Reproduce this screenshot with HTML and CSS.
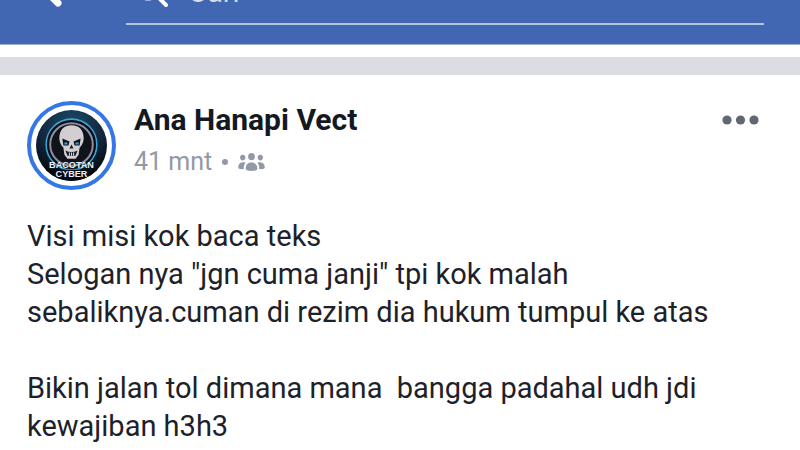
FILE: index.html
```html
<!DOCTYPE html>
<html lang="id">
<head>
    <meta charset="UTF-8">
    <meta name="viewport" content="width=device-width, initial-scale=1.0">
    <title>Ana Hanapi Vect</title>
    <link rel="stylesheet" href="styles.css">
</head>
<body>
    <header class="top-bar">
        <button class="back-btn" type="button" aria-label="Kembali">
            <svg width="40" height="40" viewBox="0 0 40 40">
                <path d="M26 2L10 18L26 34" fill="none" stroke="#fff" stroke-width="7" stroke-linecap="round" stroke-linejoin="round"/>
            </svg>
        </button>
        <form class="search-box">
            <svg class="search-icon" width="32" height="32" viewBox="0 0 32 32">
                <circle cx="12" cy="12" r="11" fill="none" stroke="#fff" stroke-width="3"/>
                <path d="M20 19L30 29" stroke="#fff" stroke-width="4" stroke-linecap="round"/>
            </svg>
            <input type="search" placeholder="Cari" aria-label="Cari">
        </form>
    </header>

    <main class="feed">
        <article class="post">
            <div class="post-header">
                <a class="avatar" href="#" aria-label="Ana Hanapi Vect">
                    <svg viewBox="0 0 70 70">
                        <defs>
                            <clipPath id="round"><circle cx="35" cy="35" r="35"/></clipPath>
                            <radialGradient id="night" cx="50%" cy="20%" r="75%">
                                <stop offset="0" stop-color="#1c4a66"/>
                                <stop offset="0.6" stop-color="#12283e"/>
                                <stop offset="1" stop-color="#050a12"/>
                            </radialGradient>
                        </defs>
                        <g clip-path="url(#round)">
                            <rect width="70" height="70" fill="url(#night)"/>
                            <circle cx="35" cy="34" r="25" fill="#0a0e18" stroke="#3da5d6" stroke-width="1.5"/>
                            <circle cx="35" cy="34" r="21" fill="#11131c" stroke="#8d909b" stroke-width="2"/>
                            <!-- skull -->
                            <path d="M35 15C27 15 23 20 23 28C23 32 25 35 27 37L28 44L31 48H39L42 44L43 37C45 35 47 32 47 28C47 20 43 15 35 15Z" fill="#d3ced1"/>
                            <path d="M26 28L33 31L32 35L27 35ZM44 28L37 31L38 35L43 35Z" fill="#10141f"/>
                            <path d="M28 33H31M39 33H42" stroke="#3fa3d6" stroke-width="2"/>
                            <path d="M35 34L33 38H37Z" fill="#191a24"/>
                            <path d="M29 40Q35 43 41 40L39 45H31Z" fill="#20212b"/>
                            <path d="M33 42V45M35 42V45M37 42V45" stroke="#d5d2d5"/>
                            <path d="M0 59H70V70H0Z" fill="#050a12"/>
                            <text class="avatar-text" x="35" y="57">BACOTAN</text>
                            <text class="avatar-text" x="35" y="66">CYBER</text>
                        </g>
                    </svg>
                </a>
                <div class="post-info">
                    <h1><a href="#">Ana Hanapi Vect</a></h1>
                    <p class="post-meta">
                        <span>41 mnt</span>
                        <span class="dot"></span>
                        <svg width="27" height="18" viewBox="0 0 27 18" fill="#9299a6" role="img" aria-label="Grup">
                            <ellipse cx="13.5" cy="3.6" rx="3.4" ry="3.6"/>
                            <ellipse cx="4.7" cy="4.6" rx="2.6" ry="2.8"/>
                            <ellipse cx="22.3" cy="4.6" rx="2.6" ry="2.8"/>
                            <path d="M7.7 15.5C7.7 11.5 10 9.6 13.5 9.6S19.3 11.5 19.3 15.5C19.3 17.2 18 17.9 13.5 17.9S7.7 17.2 7.7 15.5Z"/>
                            <path d="M7.6 9.6C6 12 5.5 14 5.9 16.1C2.5 16.5 0.2 16 0.2 14.5C0.2 10.5 3 8.7 7.6 9.6Z"/>
                            <path d="M19.4 9.6C21 12 21.5 14 21.1 16.1C24.5 16.5 26.8 16 26.8 14.5C26.8 10.5 24 8.7 19.4 9.6Z"/>
                        </svg>
                    </p>
                </div>
                <button class="more-btn" type="button" aria-label="Lainnya">
                    <svg width="37" height="10" viewBox="0 0 37 10" fill="#616874">
                        <circle cx="5" cy="5" r="4.6"/>
                        <circle cx="18.5" cy="5" r="4.6"/>
                        <circle cx="32" cy="5" r="4.6"/>
                    </svg>
                </button>
            </div>
            <div class="post-text">
                <p>Visi misi kok baca teks<br>Selogan nya "jgn cuma janji" tpi kok malah sebaliknya.cuman di rezim dia hukum tumpul ke atas</p>
                <p>Bikin jalan tol dimana mana&nbsp; bangga padahal udh jdi kewajiban h3h3</p>
            </div>
        </article>
    </main>
</body>
</html>
```
FILE: styles.css
```css
* {
    margin: 0;
    padding: 0;
    box-sizing: border-box;
    font-family: Roboto, sans-serif;
}

body {
    background-color: #fff;
    color: #1d2129;
}

a {
    color: inherit;
    text-decoration: none;
}

button {
    background: none;
    border: none;
    cursor: pointer;
}

svg {
    display: block;
}

/* Top bar, partly scrolled out of view */
.top-bar {
    display: flex;
    align-items: flex-end;
    height: 45px;
    padding: 0 36px 19px 32px;
    background-color: #4267b2;
    border-bottom: 1px solid #9fb2d8;
    overflow: hidden;
}

.back-btn {
    margin-right: 54px;
    padding-bottom: 16px;
}

.search-box {
    flex: 1;
    display: flex;
    align-items: flex-end;
    height: 60px;
    padding: 0 10px 15px;
    border-bottom: 2px solid #b3c2e0;
}

.search-icon {
    margin-right: 20px;
}

.search-box input {
    flex: 1;
    min-width: 0;
    height: 32px;
    border: none;
    outline: none;
    background: none;
    color: #fff;
    font-size: 29px;
}

.search-box input::placeholder {
    color: #d4ddee;
}

.feed {
    margin-top: 12px;
    border-top: 18px solid #dcdde2;
}

.post {
    padding: 26px 27px;
}

.post-header {
    display: flex;
    align-items: flex-start;
}

.avatar {
    width: 89px;
    height: 89px;
    margin-right: 18px;
    padding: 5px;
    border: 4px solid #3578e5;
    border-radius: 50%;
}

.avatar-text {
    fill: #e8f1fa;
    font-family: "Liberation Sans", sans-serif;
    font-size: 9px;
    font-weight: bold;
    text-anchor: middle;
}

.post-info {
    flex: 1;
}

.post-info h1 {
    font-size: 30px;
    line-height: 38px;
    color: #141823;
}

.post-meta {
    display: flex;
    align-items: center;
    gap: 10px;
    margin-top: 5px;
    font-size: 25px;
    line-height: 36px;
    color: #9299a6;
}

.dot {
    width: 6px;
    height: 6px;
    border-radius: 50%;
    background-color: #9299a6;
}

.more-btn {
    margin-right: 14px;
    padding-top: 14px;
}

.post-text {
    margin-top: 27px;
    font-size: 29px;
    line-height: 38px;
}

.post-text p + p {
    margin-top: 38px;
}
```
